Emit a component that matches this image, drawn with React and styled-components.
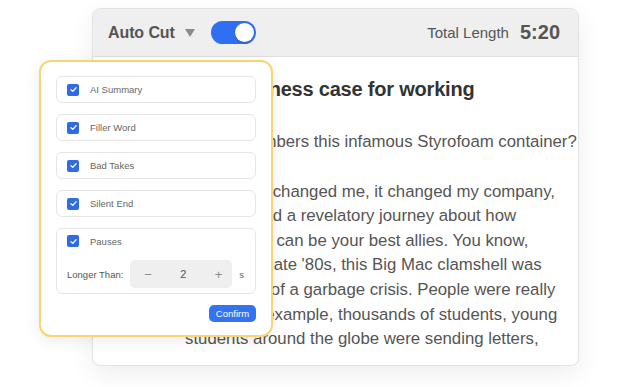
import React from 'react';
import styled, { createGlobalStyle } from 'styled-components';

const GlobalStyle = createGlobalStyle`
    html, body {
        margin: 0;
        padding: 0;
        background: #ffffff;
        font-family: "Liberation Sans", Arial, Helvetica, sans-serif;
    }
`;

const Stage = styled.div`
    position: relative;
    width: 626px;
    height: 387px;
    box-sizing: border-box;
    padding: 8px 0 0 92px;
    overflow: hidden;
`;

const Card = styled.div`
    width: 487px;
    height: 358px;
    box-sizing: border-box;
    border: 1px solid #e3e3e3;
    border-radius: 8px;
    background: #fff;
    box-shadow: 0 8px 24px rgba(0, 0, 0, 0.07);
    overflow: hidden;
    display: flex;
    flex-direction: column;
`;

const Header = styled.div`
    height: 47px;
    flex-shrink: 0;
    display: flex;
    align-items: center;
    padding: 0 18px 0 15px;
    background: #efefef;
    border-bottom: 1px solid #e0e0e0;
    color: #555;
`;

const ModeName = styled.span`
    font-size: 16px;
    font-weight: 700;
    letter-spacing: -0.1px;
`;

const Caret = styled.span`
    width: 0;
    height: 0;
    margin: 1px 0 0 10px;
    border-left: 5px solid transparent;
    border-right: 5px solid transparent;
    border-top: 8px solid #8a8a8a;
`;

const Toggle = styled.div`
    position: relative;
    width: 45px;
    height: 23px;
    margin-left: 16px;
    border-radius: 12px;
    background: ${(p) => (p.on ? '#2f6ff2' : '#c8c8c8')};

    &::after {
        content: '';
        position: absolute;
        top: 2px;
        left: ${(p) => (p.on ? '24px' : '2px')};
        width: 19px;
        height: 19px;
        border-radius: 50%;
        background: #fff;
        box-shadow: 0 1px 2px rgba(0, 0, 0, 0.2);
    }
`;

const Spacer = styled.div`
    flex: 1;
`;

const TotalLabel = styled.span`
    font-size: 15px;
    margin-right: 11px;
`;

const TotalValue = styled.span`
    font-size: 20px;
    font-weight: 700;
`;

const Transcript = styled.div`
    padding: 20px 0 0 92px;
    color: #555;
    white-space: nowrap;
`;

const Title = styled.h2`
    margin: 0 0 29px 3px;
    font-size: 20px;
    line-height: 24px;
    font-weight: 700;
    letter-spacing: -0.2px;
    color: #333;
`;

const Paragraph = styled.p`
    margin: 0 0 25px;
    font-size: 16.8px;
    line-height: 24.6px;
`;

const Line = styled.span`
    display: block;
`;

const Popover = styled.div`
    position: absolute;
    left: 39px;
    top: 60px;
    width: 234px;
    box-sizing: border-box;
    padding: 14px 15px 13px;
    background: #fff;
    border: 2px solid #f6d572;
    border-radius: 12px;
    box-shadow: 0 4px 16px rgba(0, 0, 0, 0.08);
    display: flex;
    flex-direction: column;
    gap: 11px;
`;

const Option = styled.div`
    box-sizing: border-box;
    border: 1px solid #e6e6e6;
    border-radius: 6px;
    padding: ${(p) => (p.tall ? '6px 10px 5px' : '0 10px')};
    height: ${(p) => (p.tall ? '66px' : '27px')};
    display: flex;
    flex-direction: column;
    justify-content: ${(p) => (p.tall ? 'space-between' : 'center')};
`;

const CheckRow = styled.label`
    display: flex;
    align-items: center;
    gap: 11px;
    height: 12px;
    font-size: 9.5px;
    color: #666;
`;

const Box = styled.span`
    width: 12px;
    height: 12px;
    border-radius: 2px;
    background: #2f6be3;
    display: flex;
    align-items: center;
    justify-content: center;
`;

const ThresholdRow = styled.div`
    display: flex;
    align-items: center;
    font-size: 9.5px;
    color: #555;
`;

const Stepper = styled.div`
    width: 102px;
    height: 28px;
    margin-left: 7px;
    border-radius: 5px;
    background: #efefef;
    display: flex;
    align-items: center;
    justify-content: space-between;
    padding: 0 10px 0 14px;
    box-sizing: border-box;
`;

const StepButton = styled.span`
    font-size: 13px;
    color: #8a8a8a;
`;

const StepValue = styled.span`
    font-size: 11px;
    color: #555;
`;

const Unit = styled.span`
    margin-left: 7px;
    font-size: 9.5px;
    color: #666;
`;

const Footer = styled.div`
    display: flex;
    justify-content: flex-end;
`;

const ConfirmButton = styled.button`
    width: 47px;
    height: 17px;
    padding: 0;
    border: none;
    border-radius: 5px;
    background: #3373f2;
    color: #fff;
    font-family: inherit;
    font-size: 9.5px;
`;

const Check = () => (
    <Box>
        <svg width="9" height="9" viewBox="0 0 10 10" fill="none">
            <path d="M2.2 5.2 4.2 7.1 7.9 3.1" stroke="#fff" strokeWidth="1.4" strokeLinecap="round" strokeLinejoin="round" />
        </svg>
    </Box>
);

const options = ['AI Summary', 'Filler Word', 'Bad Takes', 'Silent End'];

const App = () => (
    <>
        <GlobalStyle />
        <Stage>
            <Card>
                <Header>
                    <ModeName>Auto Cut</ModeName>
                    <Caret />
                    <Toggle on />
                    <Spacer />
                    <TotalLabel>Total Length</TotalLabel>
                    <TotalValue>5:20</TotalValue>
                </Header>
                <Transcript>
                    <Title>The business case for working</Title>
                    <Paragraph>
                        <Line>Who remembers this infamous Styrofoam container?</Line>
                    </Paragraph>
                    <Paragraph>
                        <Line>That object changed me, it changed my company,</Line>
                        <Line>and it started a revelatory journey about how</Line>
                        <Line>adversaries can be your best allies. You know,</Line>
                        <Line>around the late '80s, this Big Mac clamshell was</Line>
                        <Line>the symbol of a garbage crisis. People were really</Line>
                        <Line>upset. For example, thousands of students, young</Line>
                        <Line>students around the globe were sending letters,</Line>
                    </Paragraph>
                </Transcript>
            </Card>

            <Popover>
                {options.map((opt) => (
                    <Option key={opt}>
                        <CheckRow>
                            <Check />
                            {opt}
                        </CheckRow>
                    </Option>
                ))}
                <Option tall>
                    <CheckRow>
                        <Check />
                        Pauses
                    </CheckRow>
                    <ThresholdRow>
                        Longer Than:
                        <Stepper>
                            <StepButton>−</StepButton>
                            <StepValue>2</StepValue>
                            <StepButton>+</StepButton>
                        </Stepper>
                        <Unit>s</Unit>
                    </ThresholdRow>
                </Option>
                <Footer>
                    <ConfirmButton>Confirm</ConfirmButton>
                </Footer>
            </Popover>
        </Stage>
    </>
);

export default App;
